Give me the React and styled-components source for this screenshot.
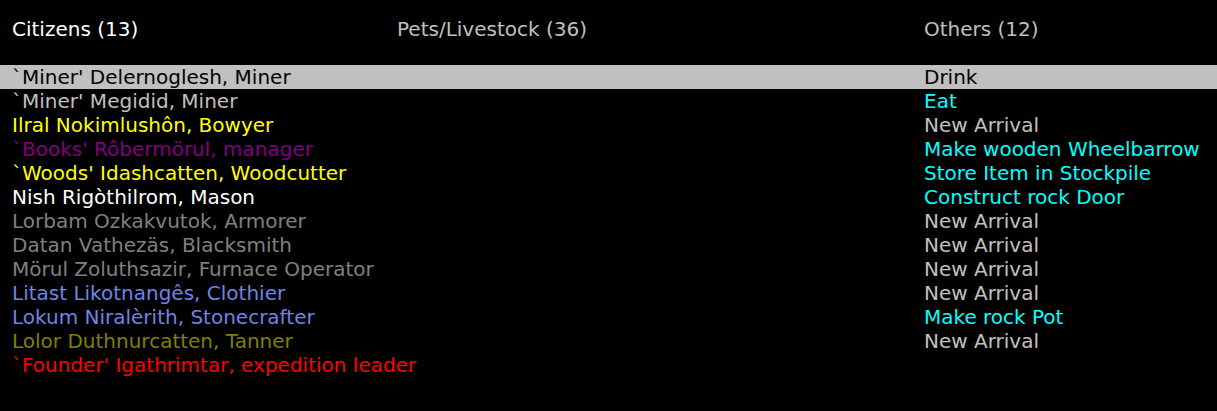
import React from 'react';
import styled, { createGlobalStyle } from 'styled-components';

const GlobalStyle = createGlobalStyle`
  html, body {
    margin: 0;
    padding: 0;
    background: #000;
  }
  body {
    font-family: 'DejaVu Sans', 'Liberation Sans', sans-serif;
    font-size: 20px;
  }
`;

const Screen = styled.div`
  width: 1217px;
  height: 411px;
  padding-top: 17px;
  box-sizing: border-box;
  background: #000;
  overflow: hidden;
`;

const Columns = styled.div`
  display: grid;
  grid-template-columns: 385px 527px 1fr;
  padding-left: 12px;
  height: 24px;
  line-height: 24px;
  white-space: nowrap;
`;

const Tabs = styled(Columns)`
  margin-bottom: 24px;
`;

const Tab = styled.div`
  color: ${(p) => (p.$active ? '#ffffff' : '#c0c0c0')};
`;

const Row = styled(Columns)`
  background: ${(p) => (p.$selected ? '#c0c0c0' : 'transparent')};
`;

const Cell = styled.div`
  color: ${(p) => p.$color};
`;

const palette = {
  white: '#ffffff',
  lgray: '#c0c0c0',
  dgray: '#808080',
  yellow: '#ffff00',
  magenta: '#800080',
  lblue: '#6f84e6',
  olive: '#808000',
  red: '#ff0000',
  cyan: '#00ffff',
};

const units = [
  { name: "`Miner' Delernoglesh, Miner", color: 'lgray', job: 'Drink', jobColor: 'lgray' },
  { name: "`Miner' Megidid, Miner", color: 'lgray', job: 'Eat', jobColor: 'cyan' },
  { name: 'Ilral Nokimlushôn, Bowyer', color: 'yellow', job: 'New Arrival', jobColor: 'lgray' },
  { name: "`Books' Rôbermörul, manager", color: 'magenta', job: 'Make wooden Wheelbarrow', jobColor: 'cyan' },
  { name: "`Woods' Idashcatten, Woodcutter", color: 'yellow', job: 'Store Item in Stockpile', jobColor: 'cyan' },
  { name: 'Nish Rigòthilrom, Mason', color: 'white', job: 'Construct rock Door', jobColor: 'cyan' },
  { name: 'Lorbam Ozkakvutok, Armorer', color: 'dgray', job: 'New Arrival', jobColor: 'lgray' },
  { name: 'Datan Vathezäs, Blacksmith', color: 'dgray', job: 'New Arrival', jobColor: 'lgray' },
  { name: 'Mörul Zoluthsazir, Furnace Operator', color: 'dgray', job: 'New Arrival', jobColor: 'lgray' },
  { name: 'Litast Likotnangês, Clothier', color: 'lblue', job: 'New Arrival', jobColor: 'lgray' },
  { name: 'Lokum Niralèrith, Stonecrafter', color: 'lblue', job: 'Make rock Pot', jobColor: 'cyan' },
  { name: 'Lolor Duthnurcatten, Tanner', color: 'olive', job: 'New Arrival', jobColor: 'lgray' },
  { name: "`Founder' Igathrimtar, expedition leader", color: 'red', job: '', jobColor: 'lgray' },
];

const App = () => {
  return (
    <>
      <GlobalStyle />
      <Screen>
        <Tabs>
          <Tab $active>Citizens (13)</Tab>
          <Tab>Pets/Livestock (36)</Tab>
          <Tab>Others (12)</Tab>
        </Tabs>
        {units.map((u, i) => {
          const selected = i === 0;
          return (
            <Row key={u.name} $selected={selected}>
              <Cell $color={selected ? '#000' : palette[u.color]}>{u.name}</Cell>
              <Cell />
              <Cell $color={selected ? '#000' : palette[u.jobColor]}>{u.job}</Cell>
            </Row>
          );
        })}
      </Screen>
    </>
  );
};

export default App;
